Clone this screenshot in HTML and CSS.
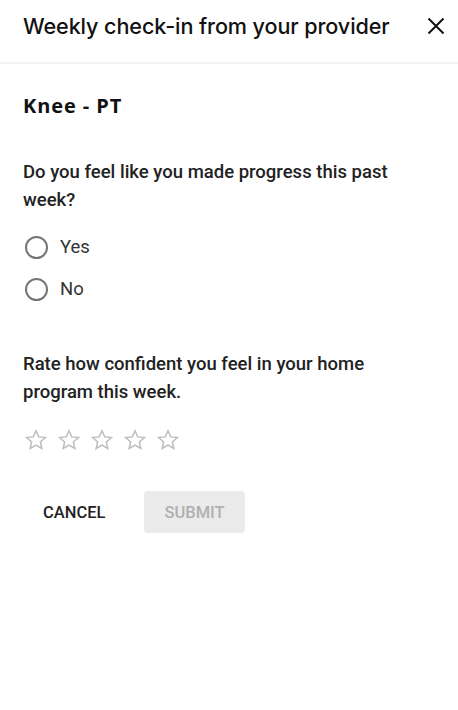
FILE: index.html
```html
<!DOCTYPE html>
<html lang="en">
<head>
    <meta charset="UTF-8">
    <meta name="viewport" content="width=device-width, initial-scale=1.0">
    <title>Weekly check-in</title>
    <link rel="stylesheet" href="styles.css">
</head>
<body>
    <div class="dialog">
        <header class="dialog-header">
            <h1>Weekly check-in from your provider</h1>
            <button class="close-btn" aria-label="Close">
                <svg width="18" height="18" viewBox="0 0 18 18">
                    <path d="M1.5 1.5 L16.5 16.5 M16.5 1.5 L1.5 16.5" stroke="#111" stroke-width="2" fill="none"/>
                </svg>
            </button>
        </header>

        <div class="dialog-body">
            <h2>Knee - PT</h2>

            <p class="question">Do you feel like you made progress this past week?</p>
            <div class="radio-group">
                <label class="radio"><span class="radio-circle"></span>Yes</label>
                <label class="radio"><span class="radio-circle"></span>No</label>
            </div>

            <p class="question question-second">Rate how confident you feel in your home program this week.</p>
            <div class="stars">
                <svg class="star" viewBox="0 0 24 24"><path d="M12 2.8l2.75 6.1 6.65.6-5.05 4.4 1.5 6.5L12 17l-5.85 3.4 1.5-6.5L2.6 9.5l6.65-.6z"/></svg>
                <svg class="star" viewBox="0 0 24 24"><path d="M12 2.8l2.75 6.1 6.65.6-5.05 4.4 1.5 6.5L12 17l-5.85 3.4 1.5-6.5L2.6 9.5l6.65-.6z"/></svg>
                <svg class="star" viewBox="0 0 24 24"><path d="M12 2.8l2.75 6.1 6.65.6-5.05 4.4 1.5 6.5L12 17l-5.85 3.4 1.5-6.5L2.6 9.5l6.65-.6z"/></svg>
                <svg class="star" viewBox="0 0 24 24"><path d="M12 2.8l2.75 6.1 6.65.6-5.05 4.4 1.5 6.5L12 17l-5.85 3.4 1.5-6.5L2.6 9.5l6.65-.6z"/></svg>
                <svg class="star" viewBox="0 0 24 24"><path d="M12 2.8l2.75 6.1 6.65.6-5.05 4.4 1.5 6.5L12 17l-5.85 3.4 1.5-6.5L2.6 9.5l6.65-.6z"/></svg>
            </div>

            <div class="actions">
                <button class="btn-text">CANCEL</button>
                <button class="btn-submit" disabled>SUBMIT</button>
            </div>
        </div>
    </div>
</body>
</html>
```

FILE: styles.css
```css
* {
    box-sizing: border-box;
    margin: 0;
    padding: 0;
}

body {
    font-family: 'Roboto', sans-serif;
    color: #222;
    background-color: #fff;
}

.dialog-header {
    display: flex;
    align-items: center;
    justify-content: space-between;
    height: 64px;
    padding: 0 13px 10px 23px;
    border-bottom: 2px solid #f2f2f2;
}

.dialog-header h1 {
    font-family: 'Inter', sans-serif;
    font-size: 21.6px;
    font-weight: 500;
    color: #111;
    letter-spacing: -0.1px;
}

.close-btn {
    background: none;
    border: none;
    width: 18px;
    height: 18px;
    display: flex;
}

.dialog-body {
    padding: 30px 35px 30px 23px;
}

.dialog-body h2 {
    font-family: 'Open Sans', sans-serif;
    font-size: 20px;
    font-weight: 700;
    line-height: 24px;
    letter-spacing: 0.9px;
    color: #111;
    margin-bottom: 40px;
}

.question {
    font-size: 18.5px;
    line-height: 28px;
    font-weight: 500;
    color: #222;
}

.question-second {
    margin-top: 49px;
}

.radio-group {
    display: flex;
    flex-direction: column;
    gap: 18px;
    margin-top: 21px;
}

.radio {
    display: flex;
    align-items: center;
    gap: 12px;
    font-size: 18.5px;
    color: #333;
    height: 24px;
    padding-left: 2px;
}

.radio-circle {
    width: 23px;
    height: 23px;
    border: 2px solid #757575;
    border-radius: 50%;
}

.stars {
    display: flex;
    gap: 9px;
    margin-top: 22px;
    padding-left: 1px;
}

.star {
    width: 24px;
    height: 24px;
    fill: none;
    stroke: #bdbdbd;
    stroke-width: 1.5;
    stroke-linejoin: miter;
}

.actions {
    display: flex;
    gap: 19px;
    margin-top: 39px;
}

.actions button {
    font-family: 'Roboto', sans-serif;
    font-size: 16.5px;
    font-weight: 500;
    border: none;
    border-radius: 4px;
    height: 42px;
    padding: 0 20px;
}

.btn-text {
    background: none;
    color: #222;
}

.btn-submit {
    background-color: #ebebeb;
    color: #b0b0b0;
    padding: 0 22px;
}
```
